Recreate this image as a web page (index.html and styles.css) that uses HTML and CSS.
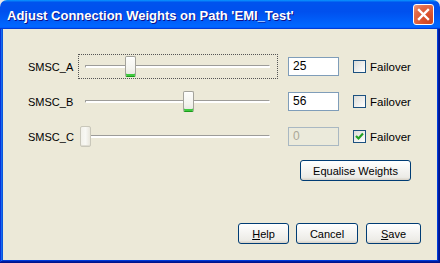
FILE: index.html
```html
<!DOCTYPE html>
<html>
<head>
<meta charset="utf-8">
<link rel="stylesheet" href="styles.css">
</head>
<body>
<div class="window">
  <div class="titlebar">
    <span class="title">Adjust Connection Weights on Path 'EMI_Test'</span>
    <span class="close">
      <svg width="13" height="13" viewBox="0 0 13 13"><path d="M2 2 L11 11 M11 2 L2 11" stroke="#fff" stroke-width="2.4" stroke-linecap="square"/></svg>
    </span>
  </div>
  <div class="content">
    <div class="rows">
      <div class="row">
        <span class="label">SMSC_A</span>
        <div class="slider focus">
          <div class="track"></div>
          <div class="thumb" style="left:46px"></div>
        </div>
        <div class="field">25</div>
        <div class="check"><span class="box"></span><span>Failover</span></div>
      </div>
      <div class="row">
        <span class="label">SMSC_B</span>
        <div class="slider">
          <div class="track"></div>
          <div class="thumb" style="left:104px"></div>
        </div>
        <div class="field">56</div>
        <div class="check"><span class="box"></span><span>Failover</span></div>
      </div>
      <div class="row">
        <span class="label">SMSC_C</span>
        <div class="slider">
          <div class="track"></div>
          <div class="thumb disabled" style="left:1px"></div>
        </div>
        <div class="field disabled">0</div>
        <div class="check"><span class="box checked"><svg width="11" height="11" viewBox="0 0 11 11"><path d="M2 5 L4.5 7.5 L9 2.5" fill="none" stroke="#21a121" stroke-width="2.2"/></svg></span><span>Failover</span></div>
      </div>
    </div>
    <div class="equalise-row"><span class="btn equalise">Equalise Weights</span></div>
    <div class="footer">
      <span class="btn help"><u>H</u>elp</span>
      <span class="btn cancel">Cancel</span>
      <span class="btn save"><u>S</u>ave</span>
    </div>
  </div>
</div>
</body>
</html>
```
FILE: styles.css
```css
html, body {
  margin: 0;
  padding: 0;
  background: #e8e8e8;
}
.window {
  width: 440px;
  height: 263px;
  display: flex;
  flex-direction: column;
  font-family: "Liberation Sans", Arial, sans-serif;
  font-size: 11px;
  color: #000;
}
.titlebar {
  height: 29px;
  flex: none;
  box-sizing: border-box;
  border-radius: 7px 7px 0 0;
  background: linear-gradient(180deg, #0997ff, #0053ee 8%, #0050ee 40%, #0066ff 88%, #0066ff 93%, #005bff 95%, #003dd7 96%, #003dd7);
  display: flex;
  align-items: center;
  padding: 0 6px 0 7px;
}
.title {
  flex: 1;
  color: #fff;
  font-family: "Liberation Sans", Arial, sans-serif;
  font-weight: bold;
  font-size: 13px;
  text-shadow: 1px 1px #0f1089;
  padding-top: 1px;
}
.close {
  width: 21px;
  height: 21px;
  box-sizing: border-box;
  border: 1px solid #fff;
  border-radius: 3px;
  background: radial-gradient(circle at 80% 85%, #cc4622 0%, #d9502c 30%, #e36b48 70%, #f09c84 100%);
  display: flex;
  align-items: center;
  justify-content: center;
}
.close svg { display: block; }
.content {
  flex: 1;
  background: #ece9d8;
  box-shadow: inset -1px -1px #00138c, inset 1px 0 #0831d9, inset -2px -2px #001ea0, inset 2px 0 #166aee, inset -3px -3px #003bda, inset 3px 0 #0855dd;
  display: flex;
  flex-direction: column;
  padding: 20px 0 0 28px;
}
.rows {
  display: flex;
  flex-direction: column;
}
.row {
  height: 35px;
  display: flex;
  align-items: center;
}
.label {
  width: 50px;
}
.slider {
  position: relative;
  width: 200px;
  height: 25px;
  box-sizing: border-box;
  border: 1px dotted transparent;
}
.slider.focus {
  border-color: #555;
}
.track {
  position: absolute;
  left: 6px;
  top: 10px;
  width: 185px;
  height: 3px;
  box-sizing: border-box;
  border-top: 1px solid #9d9c99;
  border-left: 1px solid #9d9c99;
  border-bottom: 1px solid #fff;
  border-right: 1px solid #fff;
  border-radius: 1px;
  background: #fff;
}
.thumb {
  position: absolute;
  top: 1px;
  width: 11px;
  height: 21px;
  box-sizing: border-box;
  border: 1px solid #a4a39b;
  border-bottom-color: #1b9a1b;
  border-radius: 2px;
  background: linear-gradient(180deg, #fdfdfb, #f4f4ef 60%, #e6e5df);
  box-shadow: inset 0 -2px #3fc93f, inset 0 1px #fff;
}
.thumb.disabled {
  border-color: #c9c7ba;
  background: linear-gradient(90deg, #f2f1ea, #f8f8f4 50%, #e9e7dd);
  box-shadow: inset 0 -1px #dedcd2;
}
.field {
  margin-left: 10px;
  width: 51px;
  height: 19px;
  box-sizing: border-box;
  border: 1px solid #7f9db9;
  background: #fff;
  padding-left: 4px;
  line-height: 17px;
  font-size: 12px;
}
.field.disabled {
  background: #ebeadb;
  color: #aca899;
  border-color: #a9b8c2;
}
.check {
  margin-left: 14px;
  display: flex;
  align-items: center;
  gap: 4px;
  font-size: 11.5px;
}
.box {
  width: 13px;
  height: 13px;
  box-sizing: border-box;
  border: 1px solid #1c5180;
  background: linear-gradient(135deg, #dcdcd7, #fff);
  display: flex;
  align-items: center;
  justify-content: center;
}
.box svg { display: block; }
.btn {
  display: flex;
  align-items: center;
  justify-content: center;
  height: 21px;
  box-sizing: border-box;
  border: 1px solid #003c74;
  border-radius: 3px;
  background: linear-gradient(180deg, #fff, #ecebe6 86%, #d6d0c5);
  font-size: 11px;
}
.equalise-row {
  display: flex;
  justify-content: flex-end;
  padding-right: 29px;
  margin-top: 6px;
}
.equalise { width: 111px; }
.footer {
  display: flex;
  justify-content: flex-end;
  padding-right: 19px;
  margin-top: 42px;
  gap: 7px;
}
.help { width: 51px; }
.cancel { width: 62px; }
.save { width: 55px; margin-left: 1px; }
```
